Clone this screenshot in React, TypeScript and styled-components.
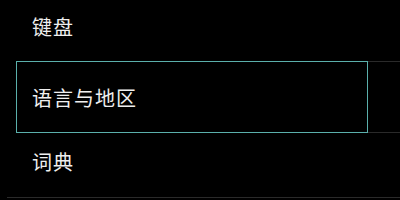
//#########
// Imports
//#########
import * as React from 'react';

import styled, { createGlobalStyle } from 'styled-components';

//#######
// Style
//#######
const GlobalStyle = createGlobalStyle`
  html, body {
    margin: 0;
    padding: 0;
    background: #000000;
  }
`;

const StyledPage = styled.div`
  width: 400px;
  height: 200px;
  overflow: hidden;
  background: #000000;
  font-family: "Noto Sans CJK SC", "Noto Sans", sans-serif;
`;

const StyledList = styled.ul`
  list-style: none;
  margin: 0;
  padding: 0;
`;

const StyledItem = styled.li<{ $height: number; $shift: number; $inset: number }>`
  display: flex;
  align-items: stretch;
  height: ${(props) => props.$height}px;
  margin-left: ${(props) => props.$inset}px;
  border-bottom: 1px solid #2a2a2a;
  padding-bottom: ${(props) => props.$shift}px;
  box-sizing: border-box;
`;

const StyledLabel = styled.div<{ $focused?: boolean; $pad: number }>`
  flex: 1;
  display: flex;
  align-items: center;
  margin-right: ${(props) => (props.$focused ? '33px' : '0')};
  padding-left: ${(props) => props.$pad}px;
  outline: ${(props) => (props.$focused ? '1px solid #5bb0ac' : 'none')};
  color: #efefef;
  font-size: 20px;
  letter-spacing: 1px;
`;

//#############################################################
// Constants, Variables & Functions defined outside components
//#############################################################
const TEXT_LEFT = 32;

type Entry = {
  label: string;
  height: number;
  shift: number;
  inset: number;
  focused?: boolean;
};

const entries: Entry[] = [
  { label: '键盘', height: 62, shift: 8, inset: 17 },
  { label: '语言与地区', height: 71, shift: 0, inset: 17, focused: true },
  { label: '词典', height: 65, shift: 7, inset: 7 },
];

//###############
// App component
//###############
const App = () => {
  return (
    <StyledPage>
      <GlobalStyle />
      <StyledList>
        {entries.map((entry) => (
          <StyledItem
            key={entry.label}
            $height={entry.height}
            $shift={entry.shift}
            $inset={entry.inset}
          >
            <StyledLabel $focused={entry.focused} $pad={TEXT_LEFT - entry.inset}>
              {entry.label}
            </StyledLabel>
          </StyledItem>
        ))}
      </StyledList>
    </StyledPage>
  );
};

export default App;
